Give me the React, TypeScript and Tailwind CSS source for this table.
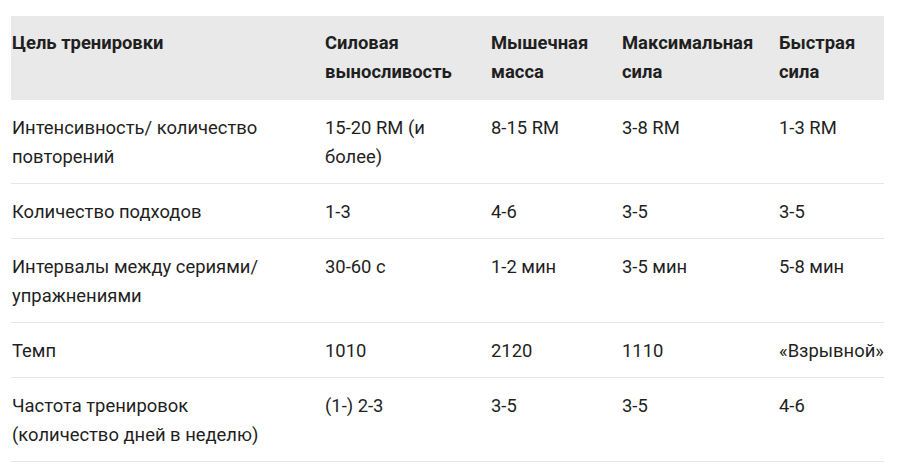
import React from 'react';

interface Row {
  goal: string;
  values: string[];
}

const headers = ['Цель тренировки', 'Силовая выносливость', 'Мышечная масса', 'Максимальная сила', 'Быстрая сила'];

const rows: Row[] = [
  { goal: 'Интенсивность/ количество повторений', values: ['15-20 RM (и более)', '8-15 RM', '3-8 RM', '1-3 RM'] },
  { goal: 'Количество подходов', values: ['1-3', '4-6', '3-5', '3-5'] },
  { goal: 'Интервалы между сериями/ упражнениями', values: ['30-60 с', '1-2 мин', '3-5 мин', '5-8 мин'] },
  { goal: 'Темп', values: ['1010', '2120', '1110', '«Взрывной»'] },
  { goal: 'Частота тренировок (количество дней в неделю)', values: ['(1-) 2-3', '3-5', '3-5', '4-6'] },
];

const colWidths = ['w-[313px]', 'w-[166px]', 'w-[131px]', 'w-[157px]', 'w-[106px]'];

const App: React.FC = () => {
  return (
    <div className="min-h-[471px] w-[900px] bg-white pl-[11px] pt-[16px] font-['Roboto',sans-serif] text-[18.4px] leading-[29px] text-[#1f1f1f]">
      <table className="w-[873px] table-fixed border-collapse">
        <colgroup>
          {colWidths.map((w, i) => (
            <col key={i} className={w} />
          ))}
        </colgroup>
        <thead>
          <tr className="bg-[#e9e9e9]">
            {headers.map((h, i) => (
              <th
                key={h}
                className={`pt-[12px] pb-[14px] pl-[1px] text-left align-top font-bold ${i === 0 ? 'pr-[40px]' : 'pr-[16px]'}`}
              >
                {h}
              </th>
            ))}
          </tr>
        </thead>
        <tbody>
          {rows.map((row) => (
            <tr key={row.goal} className="border-b border-[#e6e6e6]">
              <td className="pt-[13px] pb-[12px] pl-[1px] pr-[40px] align-top">{row.goal}</td>
              {row.values.map((v, i) => (
                <td key={i} className="pt-[13px] pb-[12px] pl-[1px] pr-[16px] align-top">
                  {v}
                </td>
              ))}
            </tr>
          ))}
        </tbody>
      </table>
    </div>
  );
};

export default App;
